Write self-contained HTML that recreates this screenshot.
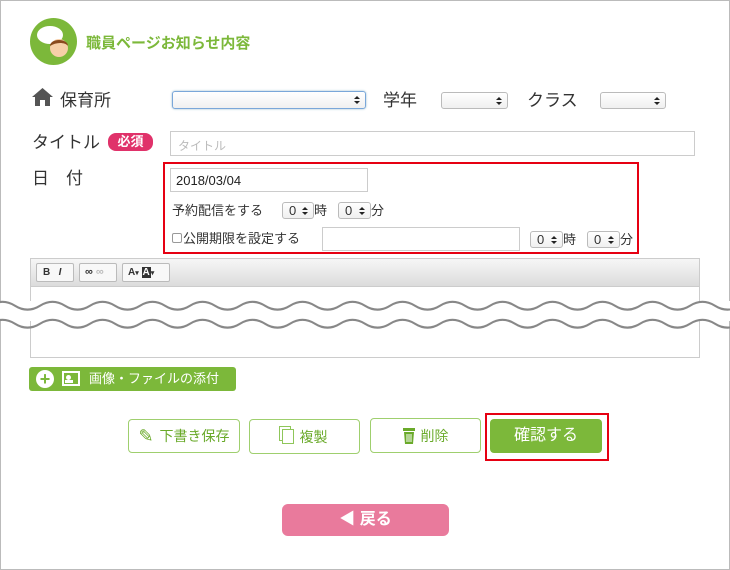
<!DOCTYPE html>
<html><head><meta charset="utf-8"><style>
*{box-sizing:border-box;margin:0;padding:0}
body{width:730px;height:570px;position:relative;background:#fff;font-family:"Liberation Sans","Noto Sans CJK JP",sans-serif;color:#333;overflow:hidden}
.a{position:absolute}
.sel{position:absolute;border:1px solid #bbb;border-radius:3px;background:linear-gradient(#fff,#f0f0f0);font-size:13px;line-height:16px;padding-left:6px}
.sel:after{content:"";position:absolute;right:5px;top:4px;width:0;height:0;border:3px solid transparent;border-bottom:3px solid #222;border-top:none}
.sel:before{content:"";position:absolute;right:5px;top:9px;width:0;height:0;border:3px solid transparent;border-top:3px solid #222;border-bottom:none}
.inp{position:absolute;border:1px solid #ccc;background:#fff}
.lbl{position:absolute;font-size:17px;color:#333}
.btn{position:absolute;border:1px solid #9fcf6e;border-radius:4px;background:#fff;color:#6aaa2a;font-size:14px;display:flex;align-items:center;justify-content:center;gap:6px}
</style></head><body>
<div class="a" style="left:0;top:0;width:730px;height:570px;border:1px solid #bbb"></div>
<svg class="a" style="left:30px;top:18px" width="47" height="47" viewBox="0 0 47 47"><circle cx="23.5" cy="23.5" r="23.5" fill="#7cb83a"/><ellipse cx="20" cy="17" rx="13" ry="9" fill="#fff"/><circle cx="29" cy="30" r="9" fill="#f7cfa8"/><path d="M20 28c0-8 18-8 18 0c-3-4-12-4-18 0z" fill="#8a4a1e"/></svg>
<div class="a" style="left:86px;top:32px;font-size:15px;font-weight:bold;color:#7cb83a">職員ページお知らせ内容</div>

<svg class="a" style="left:32px;top:88px" width="21" height="18" viewBox="0 0 21 18"><path d="M10.5 0L0 9h3v9h5v-6h5v6h5V9h3z" fill="#555"/></svg>
<div class="lbl" style="left:60px;top:86px">保育所</div>
<div class="sel" style="left:172px;top:91px;width:194px;height:18px;border-color:#7aa7d9;box-shadow:0 0 2px #9bc"></div>
<div class="lbl" style="left:383px;top:86px">学年</div>
<div class="sel" style="left:441px;top:92px;width:67px;height:17px"></div>
<div class="lbl" style="left:527px;top:86px">クラス</div>
<div class="sel" style="left:600px;top:92px;width:66px;height:17px"></div>

<div class="lbl" style="left:32px;top:128px">タイトル</div>
<div class="a" style="left:108px;top:133px;width:45px;height:18px;background:#e0326a;border-radius:8px;color:#fff;font-size:13px;font-weight:bold;text-align:center;line-height:18px">必須</div>
<div class="inp" style="left:170px;top:131px;width:525px;height:25px;font-size:12px;color:#bbb;padding:5px 7px">タイトル</div>
<div class="lbl" style="left:32px;top:164px">日　付</div>

<div class="a" style="left:163px;top:162px;width:476px;height:92px;border:2px solid #e60012"></div>
<div class="inp" style="left:170px;top:168px;width:198px;height:24px;font-size:13px;color:#222;padding:4px 5px">2018/03/04</div>
<div class="a" style="left:172px;top:200px;font-size:13px">予約配信をする</div>
<div class="sel" style="left:282px;top:202px;width:32px;height:17px">0</div><div class="a" style="left:314px;top:200px;font-size:13px">時</div>
<div class="sel" style="left:338px;top:202px;width:33px;height:17px">0</div><div class="a" style="left:371px;top:200px;font-size:13px">分</div>
<div class="a" style="left:172px;top:233px;width:10px;height:10px;border:1px solid #999;border-radius:2px"></div>
<div class="a" style="left:183px;top:228px;font-size:13px">公開期限を設定する</div>
<div class="inp" style="left:322px;top:227px;width:198px;height:24px"></div>
<div class="sel" style="left:530px;top:231px;width:33px;height:17px">0</div><div class="a" style="left:563px;top:229px;font-size:13px">時</div>
<div class="sel" style="left:587px;top:231px;width:33px;height:17px">0</div><div class="a" style="left:620px;top:229px;font-size:13px">分</div>

<div class="a" style="left:30px;top:258px;width:670px;height:100px;border:1px solid #ccc"></div>
<div class="a" style="left:31px;top:259px;width:668px;height:28px;background:linear-gradient(#f6f6f6,#dcdcdc);border-bottom:1px solid #ccc"></div>
<div class="a" style="left:36px;top:263px;width:38px;height:19px;border:1px solid #bbb;border-radius:2px;background:#f8f8f8;font-size:10px;font-weight:bold;line-height:17px;padding-left:6px">B&nbsp;&nbsp;&nbsp;<i>I</i></div>
<div class="a" style="left:79px;top:263px;width:38px;height:19px;border:1px solid #bbb;border-radius:2px;background:#f8f8f8;font-size:11px;font-weight:bold;line-height:17px;padding-left:5px">∞ <span style="color:#bbb">∞</span></div>
<div class="a" style="left:122px;top:263px;width:48px;height:19px;border:1px solid #bbb;border-radius:2px;background:#f8f8f8;font-size:10px;font-weight:bold;line-height:17px;padding-left:5px">A<span style="font-size:7px">▾</span> <span style="background:#333;color:#fff;padding:0 1px">A</span><span style="font-size:7px">▾</span></div>
<svg class="a" style="left:0;top:292px" width="730" height="40"><rect x="0" y="9" width="730" height="20" fill="#fff"/>
<path d="M0 9 q12.5 -6 25 0 t25 0 t25 0 t25 0 t25 0 t25 0 t25 0 t25 0 t25 0 t25 0 t25 0 t25 0 t25 0 t25 0 t25 0 t25 0 t25 0 t25 0 t25 0 t25 0 t25 0 t25 0 t25 0 t25 0 t25 0 t25 0 t25 0 t25 0 t25 0 t25 0" transform="translate(-10 2) scale(1 1.3)" fill="none" stroke="#888" stroke-width="1.7"/>
<path d="M0 9 q12.5 -6 25 0 t25 0 t25 0 t25 0 t25 0 t25 0 t25 0 t25 0 t25 0 t25 0 t25 0 t25 0 t25 0 t25 0 t25 0 t25 0 t25 0 t25 0 t25 0 t25 0 t25 0 t25 0 t25 0 t25 0 t25 0 t25 0 t25 0 t25 0 t25 0 t25 0" transform="translate(-10 20) scale(1 1.3)" fill="none" stroke="#888" stroke-width="1.7"/></svg>

<div class="a" style="left:29px;top:367px;width:207px;height:24px;background:#7cb83a;border-radius:3px;color:#fff;font-size:13px;line-height:24px;padding-left:60px">画像・ファイルの添付</div>
<div class="a" style="left:36px;top:370px;width:18px;height:18px;border-radius:50%;background:#fff;color:#7cb83a;font-weight:bold;font-size:18px;line-height:18px;text-align:center">+</div>
<div class="a" style="left:62px;top:371px;width:18px;height:15px;border:2px solid #fff;background:#7cb83a"><div style="position:absolute;left:2px;top:2px;width:5px;height:5px;background:#fff;border-radius:50%"></div><div style="position:absolute;left:1px;top:7px;width:8px;height:3px;background:#fff"></div></div>

<div class="btn" style="left:128px;top:419px;width:112px;height:34px"><span style="font-size:18px">✎</span>下書き保存</div>
<div class="btn" style="left:249px;top:419px;width:111px;height:35px"><span style="display:inline-block;width:12px;height:15px;border:1px solid #8fc65a;box-shadow:-3px -3px 0 -1px #fff,-3px -3px 0 0 #8fc65a"></span>複製</div>
<div class="btn" style="left:370px;top:418px;width:111px;height:35px"><svg width="12" height="17" viewBox="0 0 12 17"><rect x="0" y="1" width="12" height="3" fill="#6aaa2a"/><path d="M1 5h10l-1 12H2z" fill="#6aaa2a"/><path d="M4 7v8M6 7v8M8 7v8" stroke="#fff"/></svg>削除</div>
<div class="a" style="left:485px;top:413px;width:124px;height:48px;border:2px solid #e60012"></div>
<div class="a" style="left:490px;top:419px;width:112px;height:34px;background:#7cb83a;border-radius:4px;color:#fff;font-size:16px;text-align:center;line-height:34px">確認する</div>

<div class="a" style="left:282px;top:504px;width:167px;height:32px;background:#e97a9c;border-radius:6px;color:#fff;font-size:16px;font-weight:bold;text-align:center;line-height:32px">◀ 戻る</div>
</body></html>
